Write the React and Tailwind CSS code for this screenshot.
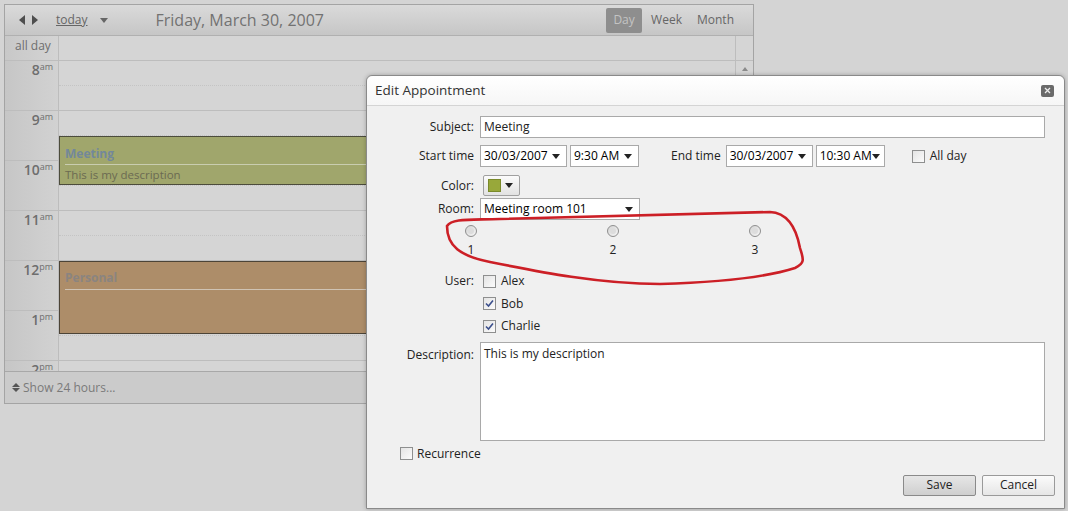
import React from "react";

const font = "font-['Open_Sans',sans-serif]";

const Caret = ({ className = "" }) => (
  <span className={`inline-block w-0 h-0 border-l-[4px] border-r-[4px] border-t-[5px] border-l-transparent border-r-transparent border-t-[#222] ${className}`} />
);

const HourLabel = ({ h, suffix }) => (
  <div className="h-[50px] border-b border-[#bdbdbd] flex justify-end pr-[5px] pt-[1px] text-[#6e6e6e]">
    <span className="text-[14px] leading-[16px] font-semibold">{h}</span>
    <span className="text-[9px] leading-[10px]">{suffix}</span>
  </div>
);

const HourRow = () => (
  <div className="h-[50px] border-b border-[#bdbdbd] flex flex-col">
    <div className="h-[25px] border-b border-dotted border-[#c4c4c4]" />
  </div>
);

const Calendar = () => {
  const hours = [
    ["8", "am"],
    ["9", "am"],
    ["10", "am"],
    ["11", "am"],
    ["12", "pm"],
    ["1", "pm"],
    ["2", "pm"],
  ];
  return (
    <div className="ml-[4px] mt-[4px] w-[750px] h-[400px] border border-[#a4a4a4] flex flex-col bg-[#d5d5d5]">
      {/* toolbar */}
      <div className="h-[31px] border-b border-[#b0b0b0] bg-gradient-to-b from-[#dadada] to-[#c6c6c6] flex items-center pl-[14px] pr-[19px]">
        <span className="w-0 h-0 border-t-[5px] border-b-[5px] border-r-[6px] border-t-transparent border-b-transparent border-r-[#4e4e4e]" />
        <span className="ml-[7px] w-0 h-0 border-t-[5px] border-b-[5px] border-l-[6px] border-t-transparent border-b-transparent border-l-[#4e4e4e]" />
        <span className="ml-[18px] text-[12px] text-[#666] underline">today</span>
        <span className="ml-[12px] w-0 h-0 border-l-[4px] border-r-[4px] border-t-[5px] border-l-transparent border-r-transparent border-t-[#666]" />
        <span className="ml-[48px] text-[16px] text-[#727272]">Friday, March 30, 2007</span>
        <div className="ml-auto flex items-center text-[12px] text-[#666]">
          <span className="h-[25px] w-[36px] rounded-[2px] bg-[#8e8e8e] text-[#c4c4c4] flex items-center justify-center">Day</span>
          <span className="ml-[9px]">Week</span>
          <span className="ml-[15px]">Month</span>
        </div>
      </div>
      {/* all day */}
      <div className="h-[25px] border-b border-[#bdbdbd] flex">
        <div className="w-[54px] border-r border-[#bdbdbd] bg-gradient-to-r from-[#c8c8c8] to-[#d4d4d4] text-[12px] text-[#6e6e6e] pl-[10px] pt-[1px]">all day</div>
        <div className="flex-1 border-r border-[#bdbdbd]" />
        <div className="w-[17px]" />
      </div>
      {/* grid */}
      <div className="flex-1 flex overflow-hidden">
        <div className="w-[54px] border-r border-[#bdbdbd] bg-gradient-to-r from-[#c6c6c6] to-[#d2d2d2]">
          {hours.map(([h, s]) => (
            <HourLabel key={h + s} h={h} suffix={s} />
          ))}
        </div>
        <div className="flex-1 relative border-r border-[#bdbdbd]">
          {hours.map(([h, s]) => (
            <HourRow key={h + s} />
          ))}
          <div className="absolute left-0 right-[4px] top-[75px] h-[49px] bg-[#a0a66c] border border-[#4c4c3c]">
            <div className="mx-[5px] mt-[8px] text-[12px] font-bold text-[#73889a] pb-[1px] border-b border-[#c9cdb0]">Meeting</div>
            <div className="mx-[5px] mt-[1px] text-[11.5px] text-[#6b6a52]">This is my description</div>
          </div>
          <div className="absolute left-0 right-[4px] top-[200px] h-[73px] bg-[#ad8d69] border border-[#4c4437]">
            <div className="mx-[5px] mt-[7px] text-[12px] font-bold text-[#8a8480] pb-[2px] border-b border-[#cfc3b4]">Personal</div>
          </div>
        </div>
        <div className="w-[17px] flex justify-center pt-[6px]">
          <span className="w-0 h-0 border-l-[3px] border-r-[3px] border-b-[4px] border-l-transparent border-r-transparent border-b-[#8a8a8a]" />
        </div>
      </div>
      {/* footer */}
      <div className="h-[32px] border-t border-[#a8a8a8] bg-[#cbcbcb] flex items-center pl-[7px] text-[12px] text-[#7a7a7a]">
        <span className="flex flex-col items-center mr-[3px]">
          <span className="w-0 h-0 border-l-[4px] border-r-[4px] border-b-[4px] border-l-transparent border-r-transparent border-b-[#555]" />
          <span className="mt-[1px] w-0 h-0 border-l-[4px] border-r-[4px] border-t-[4px] border-l-transparent border-r-transparent border-t-[#555]" />
        </span>
        Show 24 hours...
      </div>
    </div>
  );
};

const Box = ({ w, children, className = "" }) => (
  <div className={`h-[22px] bg-white border border-[#a9a9a9] flex items-center pl-[3px] pr-[6px] text-[12px] text-black ${className}`} style={{ width: w }}>
    <span className="flex-1 whitespace-nowrap">{children}</span>
    <Caret />
  </div>
);

const Check = ({ checked }) => (
  <span className="w-[13px] h-[13px] border border-[#8e8f8f] bg-gradient-to-br from-[#e4e4e4] to-[#fbfbfb] flex items-center justify-center">
    {checked && (
      <svg width="9" height="9" viewBox="0 0 9 9">
        <path d="M1 4.5 L3.5 7 L8 1.5" fill="none" stroke="#3b4f8c" strokeWidth="1.6" />
      </svg>
    )}
  </span>
);

const Radio = () => (
  <span className="w-[12px] h-[12px] rounded-full border border-[#8f8f8f] bg-gradient-to-br from-[#d4d4d4] to-[#f6f6f6] flex items-center justify-center">
    <span className="w-[6px] h-[6px] rounded-full bg-[#dcdcdc]" />
  </span>
);

const Label = ({ children, className = "" }) => (
  <div className={`w-[113px] shrink-0 text-right pr-[6px] ${className}`}>{children}</div>
);

const Dialog = () => (
  <div className={`absolute left-[366px] top-[75px] w-[699px] h-[434px] bg-[#f0f0f0] border border-[#8a8a8a] rounded-t-[6px] shadow-[0_0_4px_rgba(0,0,0,0.25)] flex flex-col text-[12px] text-[#222] ${font}`}>
    <div className="h-[30px] rounded-t-[6px] bg-gradient-to-b from-white to-[#f6f6f6] border-b border-[#d4d4d4] flex items-center pl-[8px] pr-[10px]">
      <span className="text-[13.5px] text-[#333]">Edit Appointment</span>
      <span className="ml-auto w-[13px] h-[12px] rounded-[2px] bg-[#6b6b6b] flex items-center justify-center">
        <svg width="7" height="7" viewBox="0 0 7 7">
          <path d="M1 1 L6 6 M6 1 L1 6" stroke="#eee" strokeWidth="1.3" />
        </svg>
      </span>
    </div>
    <div className="flex-1 flex flex-col pt-[10px]">
      <div className="flex items-center">
        <Label>Subject:</Label>
        <div className="w-[565px] h-[22px] bg-white border border-[#a9a9a9] pl-[3px] flex items-center">Meeting</div>
      </div>
      <div className="flex items-center mt-[7px]">
        <Label>Start time</Label>
        <Box w="87px">30/03/2007</Box>
        <Box w="69px" className="ml-[3px]">9:30 AM</Box>
        <span className="ml-[32px]">End time</span>
        <Box w="87px" className="ml-[5px]">30/03/2007</Box>
        <Box w="69px" className="ml-[3px]">10:30 AM</Box>
        <span className="ml-[27px]"><Check /></span>
        <span className="ml-[5px]">All day</span>
      </div>
      <div className="flex items-center mt-[8px]">
        <Label>Color:</Label>
        <div className="ml-[3px] w-[37px] h-[21px] rounded-[2px] border border-[#a0a0a0] bg-gradient-to-b from-[#fbfbfb] to-[#e2e2e2] flex items-center pl-[4px] gap-[4px]">
          <span className="w-[13px] h-[13px] bg-[#98a83a] border border-[#7a8a2a]" />
          <Caret />
        </div>
      </div>
      <div className="flex items-center mt-[2px]">
        <Label>Room:</Label>
        <Box w="160px">Meeting room 101</Box>
      </div>
      <div className="flex ml-[33px] mt-[5px]">
        {["1", "2", "3"].map((n) => (
          <div key={n} className="w-[142px] flex flex-col items-center">
            <Radio />
            <span className="mt-[6px] leading-[14px]">{n}</span>
          </div>
        ))}
      </div>
      <div className="flex mt-[16px]">
        <Label className="leading-[16px]">User:</Label>
        <div className="flex flex-col gap-[6px]">
          {[["Alex", false], ["Bob", true], ["Charlie", true]].map(([n, c]) => (
            <div key={n} className="flex items-center h-[16.5px] ml-[3px]">
              <Check checked={c} />
              <span className="ml-[5px]">{n}</span>
            </div>
          ))}
        </div>
      </div>
      <div className="flex mt-[7px]">
        <Label className="pt-[4px]">Description:</Label>
        <div className="w-[565px] h-[99px] bg-white border border-[#a9a9a9] pl-[3px] pt-[2px]">This is my description</div>
      </div>
      <div className="flex items-center mt-[4px] ml-[33px]">
        <Check />
        <span className="ml-[4px]">Recurrence</span>
      </div>
      <div className="flex justify-end mt-[12px] pr-[9px] gap-[6px]">
        <button className="w-[73px] h-[21px] rounded-[2px] border border-[#8a8a8a] bg-gradient-to-b from-[#e6e6e6] to-[#cfcfcf] text-[12px]">Save</button>
        <button className="w-[73px] h-[21px] rounded-[2px] border border-[#9a9a9a] bg-gradient-to-b from-[#fbfbfb] to-[#e6e6e6] text-[12px]">Cancel</button>
      </div>
    </div>
  </div>
);

export default function App() {
  return (
    <div className={`relative w-[1068px] h-[511px] overflow-hidden bg-[#d4d4d4] ${font}`}>
      <Calendar />
      <Dialog />
      <svg className="absolute left-0 top-0 pointer-events-none" width="1068" height="511" viewBox="0 0 1068 511">
        <path
          d="M447 226 C452 218 470 220 500 219 C600 217 700 213 770 212 C790 213 797 232 800 248 C803 258 806 263 795 268 C770 276 730 282 660 284 C600 284 540 272 490 262 C460 256 447 246 447 226 Z"
          fill="none"
          stroke="#cc1f26"
          strokeWidth="2.6"
          strokeLinejoin="round"
        />
      </svg>
    </div>
  );
}
